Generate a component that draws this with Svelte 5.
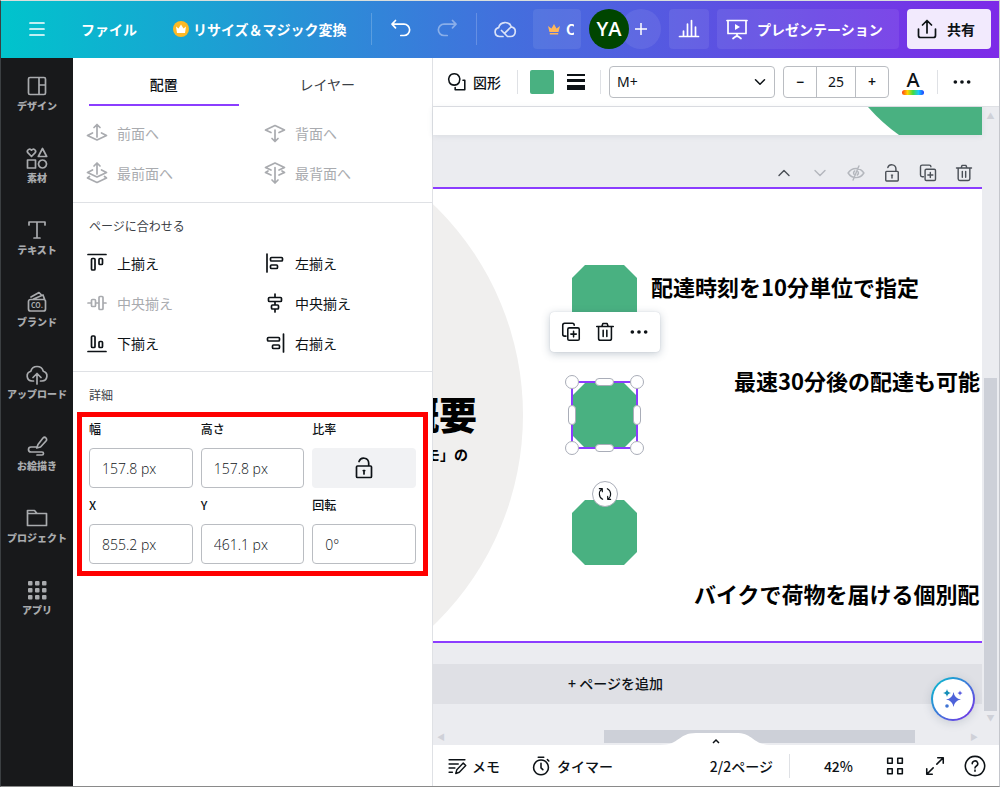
<script lang="ts">
    interface Action {
        icon: string,
        label: string,
        disabled?: boolean
    }

    // Outlines of all stroked icons, every one drawn on 24x24 grid
    const icons: Record<string, string> = {
        menu: "M5 6h14M5 12h14M5 18h14",
        undo: "M6.5 3.5 3 7.2l3.5 3.7M3.3 7.2H15a5.6 5.6 0 0 1 0 11.3h-3.2",
        redo: "M17.5 3.5 21 7.2l-3.5 3.7M20.7 7.2H9a5.6 5.6 0 0 0 0 11.3h3.2",
        cloud: "M10 19.5H6.5A4.5 4.5 0 0 1 5.7 10.6 6.6 6.6 0 0 1 18.3 9.8 4.9 4.9 0 0 1 17.6 19.5H14.5L8.5 13.5M11.5 16.3 18 10",
        chart: "M2.5 19.5h19M6.5 19v-5M10.5 19V7M14.5 19V3.5M18.5 19V10",
        present: "M2 3.5h20M3 3.5v13h18v-13M12 16.5v3M8 21.5l4-3 4 3",
        share: "M3.5 12v6.5a2 2 0 0 0 2 2h13a2 2 0 0 0 2-2V12M12 16V3.5M7.5 8 12 3.5 16.5 8",
        design: "M5 3.5h14a1.5 1.5 0 0 1 1.5 1.5v14a1.5 1.5 0 0 1-1.5 1.5H5A1.5 1.5 0 0 1 3.5 19V5A1.5 1.5 0 0 1 5 3.5zM14 3.5v17M14 11h6.5",
        elements: "M6.5 10.5 2.8 6.7a2.2 2.2 0 0 1 3.7-2.5 2.2 2.2 0 0 1 3.7 2.5zM17.5 2.5l4.2 8h-8.4zM2.5 14h8v8h-8zM17.5 14a4 4 0 1 0 .01 0z",
        text: "M4 7V4h16v3M12 4v16M9 20h6",
        brand: "M5.5 9.5h13a2 2 0 0 1 2 2V19a2 2 0 0 1-2 2h-13a2 2 0 0 1-2-2v-7.5a2 2 0 0 1 2-2zM6 7l8-4.5 2 2M8.5 9 18 5l1.5 4",
        upload: "M8.5 19H7a5 5 0 0 1-1.2-9.8 6.5 6.5 0 0 1 12.5 0A5 5 0 0 1 17 19h-1.5M12 22V12M8 15.5l4-4 4 4",
        draw: "M13 10.5 18 4a2 2 0 0 1 3 3l-5.5 6-3.8 1zM12 13H6a2.5 2.5 0 0 0 0 5h11a1.5 1.5 0 0 1 0 3h-5",
        folder: "M2.5 19.5v-15h7l2.5 3h9.5v12zM2.5 7.5H12",
        forward: "M12 16V4M9 6.5 12 3.5l3 3M7.5 12 2.5 14.5l9.5 4.5 9.5-4.5-5-2.5",
        backward: "M8 11.5 2.5 9 12 4.500l9.5 4.5-5.5 2.5M12 9v11M9 17.5l3 3 3-3",
        front: "M12 13V2.5M9 5l3-3 3 3M7.5 9 2.5 11.5 12 16l9.5-4.5-5-2.5M4.500 15.5 2.5 17l9.500 4.500L21.500 17l-2-1.500",
        back: "M8 9 2.5 6.5 12 2l9.5 4.5L16 9M5 10l-2.500 1.500L8 14M19 10l2.500 1.500L16 14M12 6.500v15.500M9 19l3 3 3-3",
        top: "M3 3.5h18M6.5 8.5a1 1 0 0 1 1-1h1.5a1 1 0 0 1 1 1V18a1 1 0 0 1-1 1H7.5a1 1 0 0 1-1-1zM14 8.5a1 1 0 0 1 1-1h1.5a1 1 0 0 1 1 1v4a1 1 0 0 1-1 1H15a1 1 0 0 1-1-1z",
        middle: "M3 12h3.5M10.5 12H14M18 12h3M7.5 8.5h2a1 1 0 0 1 1 1v5a1 1 0 0 1-1 1h-2a1 1 0 0 1-1-1v-5a1 1 0 0 1 1-1zM15 5.5h2a1 1 0 0 1 1 1v11a1 1 0 0 1-1 1h-2a1 1 0 0 1-1-1v-11a1 1 0 0 1 1-1z",
        bottom: "M3 20.5h18M6.5 6a1 1 0 0 1 1-1h1.5a1 1 0 0 1 1 1v9.5a1 1 0 0 1-1 1H7.5a1 1 0 0 1-1-1zM14 11.5a1 1 0 0 1 1-1h1.5a1 1 0 0 1 1 1v4a1 1 0 0 1-1 1H15a1 1 0 0 1-1-1z",
        left: "M4 3v18M8.5 6.5h10a1 1 0 0 1 1 1V9a1 1 0 0 1-1 1h-10a1 1 0 0 1-1-1V7.5a1 1 0 0 1 1-1zM8.5 14h5a1 1 0 0 1 1 1v1.5a1 1 0 0 1-1 1h-5a1 1 0 0 1-1-1V15a1 1 0 0 1 1-1z",
        center: "M12 3v3M12 10.5V14M12 18v3M6.5 6.5h11a1 1 0 0 1 1 1v2a1 1 0 0 1-1 1h-11a1 1 0 0 1-1-1v-2a1 1 0 0 1 1-1zM9.5 14h5a1 1 0 0 1 1 1v2a1 1 0 0 1-1 1h-5a1 1 0 0 1-1-1v-2a1 1 0 0 1 1-1z",
        right: "M20.5 3v18M5.5 6.5h10a1 1 0 0 1 1 1V9a1 1 0 0 1-1 1h-10a1 1 0 0 1-1-1V7.5a1 1 0 0 1 1-1zM10.5 14h5a1 1 0 0 1 1 1v1.5a1 1 0 0 1-1 1h-5a1 1 0 0 1-1-1V15a1 1 0 0 1 1-1z",
        lock: "M5.5 10h13a1 1 0 0 1 1 1v9.5a1 1 0 0 1-1 1h-13a1 1 0 0 1-1-1V11a1 1 0 0 1 1-1zM7 5.500a5 5 0 0 1 9.700 1.500v3M12 14.500V18M11.300 14.500h1.400",
        shape: "M9 3a6.2 6.2 0 1 0 .01 0zM18.5 10h2v10.5H10v-2.5",
        up: "M6 15l6-6 6 6",
        down: "M6 9l6 6 6-6",
        hidden: "M2.5 12S6 6.5 12 6.5 21.5 12 21.5 12 18 17.5 12 17.5 2.5 12 2.5 12zM15.5 3.5l-7 17M10.5 9.5a3.2 3.2 0 0 0-1 4M13.5 14.5a3.2 3.2 0 0 0 1-4",
        copy: "M6.5 16.5H5a2 2 0 0 1-2-2V4.5a2 2 0 0 1 2-2h8.5a2 2 0 0 1 2 2M10 7.5h9.5a1.5 1.5 0 0 1 1.5 1.5v10.5a1.5 1.5 0 0 1-1.5 1.5H10a1.5 1.5 0 0 1-1.5-1.5V9A1.5 1.5 0 0 1 10 7.5zM14.8 11.3v6M11.8 14.3h6",
        trash: "M3 6h18M8.5 6l1.2-3.2h4.6L15.5 6M5 6v13a2 2 0 0 0 2 2h10a2 2 0 0 0 2-2V6M10 10v7M14 10v7",
        notes: "M2.5 4.5h19M2.5 9.5h11M2.5 14.5h7M2.5 19.5h4M10.5 21l1.3-4.500 7.700-8 3 3-7.700 8z",
        timer: "M12 5.5a8 8 0 1 0 .01 0zM9 2.5h6M12 9v5l2 2M19 5l1.5 1.5",
        pages: "M4 3.5h5v5.5H4zM15 3.5h5v5.5h-5zM4 15h5v5.5H4zM15 15h5v5.5h-5z",
        expand: "M15 3h6v6M21 3l-7 7M9 21H3v-6M3 21l7-7",
        help: "M12 1.5a10.5 10.5 0 1 0 .01 0zM9 9.5a3 3 0 1 1 4.500 2.500c-1 .6-1.5 1-1.5 2.200M12 16.500v1.200",
        rotate: "M8.5 20A9 9 0 0 1 7.5 4.500M3.500 4h4.500v4.500M15.500 4a9 9 0 0 1 1 15.500M20.500 20H16v-4.500"
    };

    const navigation: Action[] = [
        { icon: "design", label: "デザイン" },
        { icon: "elements", label: "素材" },
        { icon: "text", label: "テキスト" },
        { icon: "brand", label: "ブランド" },
        { icon: "upload", label: "アップロード" },
        { icon: "draw", label: "お絵描き" },
        { icon: "folder", label: "プロジェクト" },
        { icon: "apps", label: "アプリ" }
    ];

    const layerActions: Action[] = [
        { icon: "forward", label: "前面へ", disabled: true },
        { icon: "backward", label: "背面へ", disabled: true },
        { icon: "front", label: "最前面へ", disabled: true },
        { icon: "back", label: "最背面へ", disabled: true }
    ];

    const alignActions: Action[] = [
        { icon: "top", label: "上揃え" },
        { icon: "left", label: "左揃え" },
        { icon: "middle", label: "中央揃え", disabled: true },
        { icon: "center", label: "中央揃え" },
        { icon: "bottom", label: "下揃え" },
        { icon: "right", label: "右揃え" }
    ];

    const pageActions: Action[] = [
        { icon: "up", label: "上に移動" },
        { icon: "down", label: "下に移動", disabled: true },
        { icon: "hidden", label: "非表示", disabled: true },
        { icon: "lock", label: "ロック" },
        { icon: "copy", label: "複製" },
        { icon: "trash", label: "削除" }
    ];

    let width = "157.8 px";
    let height = "157.8 px";
    let x = "855.2 px";
    let y = "461.1 px";
    let rotation = "0°";
    let fontSize = 25;
    let activeTab = "arrange";
</script>

{#snippet icon(name: string, size = 24)}
    <svg class="icon" width={size} height={size} viewBox="0 0 24 24" aria-hidden="true">
        {#if name == "apps"}
            {#each [3, 10, 17] as row}
                {#each [3, 10, 17] as column}
                    <rect class="solid" x={column} y={row} width="4.5" height="4.5" rx="1" />
                {/each}
            {/each}
        {:else if name == "more"}
            <circle class="solid" cx="4" cy="12" r="2.2" />
            <circle class="solid" cx="12" cy="12" r="2.2" />
            <circle class="solid" cx="20" cy="12" r="2.2" />
        {:else}
            <path d={icons[name]} />
            {#if name == "brand"}
                <text x="12" y="18" text-anchor="middle">CO.</text>
            {:else if name == "present"}
                <path class="solid" d="M10 7v6l5-3z" />
            {/if}
        {/if}
    </svg>
{/snippet}

<div class="app">
    <header>
        <button class="plain" aria-label="メニュー">{@render icon("menu")}</button>
        <button class="plain file">ファイル</button>
        <button class="plain resize">
            <svg width="16" height="16" viewBox="0 0 16 16" aria-hidden="true">
                <circle cx="8" cy="8" r="8" fill="#fdb924" />
                <path fill="#fff" d="M3 5.5l2.5 2L8 3.5l2.5 4 2.5-2-1 6.5H4z" />
            </svg>
            リサイズ＆マジック変換
        </button>
        <span class="divider"></span>
        <button class="plain undo" aria-label="元に戻す">{@render icon("undo")}</button>
        <button class="plain redo" aria-label="やり直す" disabled>{@render icon("redo")}</button>
        <span class="divider"></span>
        <button class="plain cloud" aria-label="保存済み">{@render icon("cloud")}</button>
        <div class="account">
            <button class="tile pro">
                <svg width="12" height="12" viewBox="0 0 12 12" aria-hidden="true">
                    <path fill="#ffb75a" d="M0 3l3.5 2.5L6 1l2.5 4.5L12 3l-1.5 6h-9zM1.8 10h8.4v1.5H1.8z" />
                </svg>
                <span>C</span>
            </button>
            <div class="members">
                <span class="avatar">YA</span>
                <button class="add" aria-label="メンバーを追加">
                    <svg width="12" height="12" viewBox="0 0 12 12" aria-hidden="true"><path d="M6 0v12M0 6h12" /></svg>
                </button>
            </div>
            <button class="tile chart" aria-label="分析">{@render icon("chart")}</button>
            <button class="tile present">{@render icon("present")}プレゼンテーション</button>
            <button class="tile share">{@render icon("share")}共有</button>
        </div>
    </header>

    <div class="body">
        <nav>
            {#each navigation as item}
                <button>
                    {@render icon(item.icon)}
                    <span>{item.label}</span>
                </button>
            {/each}
        </nav>

        <aside>
            <div class="tabs" role="tablist">
                <button role="tab" aria-selected={activeTab == "arrange"} class:active={activeTab == "arrange"} on:click={() => activeTab = "arrange"}>配置</button>
                <button role="tab" aria-selected={activeTab == "layers"} class:active={activeTab == "layers"} on:click={() => activeTab = "layers"}>レイヤー</button>
            </div>
            <div class="actions layers">
                {#each layerActions as action}
                    <button disabled={action.disabled}>{@render icon(action.icon)}{action.label}</button>
                {/each}
            </div>
            <section>
                <h2>ページに合わせる</h2>
                <div class="actions">
                    {#each alignActions as action}
                        <button disabled={action.disabled}>{@render icon(action.icon)}{action.label}</button>
                    {/each}
                </div>
            </section>
            <section>
                <h2>詳細</h2>
                <div class="details">
                    <label>幅 <input type="text" bind:value={width}></label>
                    <label>高さ <input type="text" bind:value={height}></label>
                    <div class="ratio">
                        <span id="ratio-label">比率</span>
                        <button aria-labelledby="ratio-label">{@render icon("lock")}</button>
                    </div>
                    <label>X <input type="text" bind:value={x}></label>
                    <label>Y <input type="text" bind:value={y}></label>
                    <label>回転 <input type="text" bind:value={rotation}></label>
                </div>
            </section>
        </aside>

        <main>
            <div class="toolbar">
                <button class="plain shape">{@render icon("shape", 22)}図形</button>
                <span class="divider"></span>
                <button class="swatch" aria-label="カラー"></button>
                <button class="plain" aria-label="線のスタイル">
                    <svg width="20" height="18" viewBox="0 0 20 18" aria-hidden="true">
                        <path fill="#0d1216" d="M1 1h18v2H1zM1 6h18v3H1zM1 12h18v5H1z" />
                    </svg>
                </button>
                <span class="divider"></span>
                <div class="font">
                    <select aria-label="フォント"><option>M+</option></select>
                    {@render icon("down", 18)}
                </div>
                <div class="stepper">
                    <button aria-label="小さく" on:click={() => fontSize -= 1}>−</button>
                    <input type="text" aria-label="フォントサイズ" bind:value={fontSize}>
                    <button aria-label="大きく" on:click={() => fontSize += 1}>+</button>
                </div>
                <button class="plain color" aria-label="テキストの色"><span>A</span></button>
                <span class="divider"></span>
                <button class="plain" aria-label="もっと見る">{@render icon("more", 20)}</button>
            </div>

            <div class="canvas">
                <div class="pages">
                    <div class="previous">
                        <svg width="114" height="28" viewBox="0 0 114 28" aria-hidden="true">
                            <path fill="#49b181" d="M0 0h114v28H31Q14 16 0 0z" />
                        </svg>
                    </div>
                    <div class="page-actions">
                        {#each pageActions as action}
                            <button aria-label={action.label} disabled={action.disabled}>{@render icon(action.icon, 20)}</button>
                        {/each}
                    </div>
                    <!-- Elements placed by user on the current page -->
                    <div class="page">
                        <div class="disc"></div>
                        <p class="title">概要</p>
                        <p class="subtitle">モ」の</p>
                        <div class="octagon first"></div>
                        <div class="octagon second"></div>
                        <div class="octagon third"></div>
                        <p class="line line-1">配達時刻を10分単位で指定</p>
                        <p class="line line-2">最速30分後の配達も可能</p>
                        <p class="line line-3">バイクで荷物を届ける個別配</p>
                        <div class="selection">
                            <i class="corner nw"></i><i class="corner ne"></i><i class="corner sw"></i><i class="corner se"></i>
                            <i class="edge n"></i><i class="edge s"></i><i class="edge w"></i><i class="edge e"></i>
                        </div>
                        <button class="rotate" aria-label="回転">{@render icon("rotate", 16)}</button>
                        <div class="floating">
                            <button aria-label="複製">{@render icon("copy", 22)}</button>
                            <button aria-label="削除">{@render icon("trash", 22)}</button>
                            <button aria-label="もっと見る">{@render icon("more", 20)}</button>
                        </div>
                    </div>
                    <button class="add-page">+ ページを追加</button>
                    <div class="scroll-x"><span>◀</span><b></b><span>▶</span></div>
                </div>
                <div class="scroll-y"><span>▲</span><b></b><span>▼</span></div>
                <button class="magic" aria-label="マジック">
                    <svg width="20" height="20" viewBox="0 0 20 20" aria-hidden="true">
                        <path fill="#4d62d9" d="M10.5 3Q11.5 9.5 18 10.5 11.5 11.5 10.5 18 9.5 11.5 3 10.5 9.5 9.5 10.5 3z" />
                        <path fill="#158fb8" d="M4 0q.5 3.5 4 4-3.5.5-4 4-.5-3.5-4-4 3.5-.5 4-4z" />
                        <path fill="#5a5ce0" d="M17 1.5q.3 2 2.5 2.5-2.2.5-2.5 2.5-.3-2-2.5-2.5 2.2-.5 2.5-2.5z" />
                        <circle cx="4" cy="17" r="1.8" fill="#3f74d4" />
                    </svg>
                </button>
            </div>

            <footer>
                <button class="notch" aria-label="サムネイルを表示">
                    <svg width="112" height="12" viewBox="0 0 112 12" aria-hidden="true">
                        <path fill="#fff" d="M0 12c20 0 18-12 36-12h40c18 0 16 12 36 12z" />
                        <path fill="none" stroke="#0d1216" stroke-width="1.5" d="M53 10l3-3 3 3" />
                    </svg>
                </button>
                <button class="plain notes">{@render icon("notes", 20)}メモ</button>
                <button class="plain timer">{@render icon("timer", 22)}タイマー</button>
                <span class="count">2/2ページ</span>
                <span class="divider"></span>
                <button class="plain zoom">42%</button>
                <div class="views">
                    <button aria-label="グリッド表示">{@render icon("pages", 22)}</button>
                    <button aria-label="全画面表示">{@render icon("expand", 22)}</button>
                    <button aria-label="ヘルプ">{@render icon("help", 22)}</button>
                </div>
            </footer>
        </main>
    </div>
</div>

<style>
    :global(body) {
        margin: 0;
    }

    .app {
        min-height: 100vh;
        box-sizing: border-box;
        display: flex;
        flex-direction: column;
        border: solid 1px #8a8a8a;
        border-top-color: #d9dfdc;
        border-left-color: #3b3f42;
        border-right-color: #c4c6cc;
        background-color: white;
        color: #0d1216;
        font-family: "Noto Sans CJK JP", sans-serif;
        font-size: 14px;
        line-height: 20px;
    }

    .app *, .app *::before {
        box-sizing: border-box;
    }

    button, input, select {
        margin: 0;
        padding: 0;
        border: none;
        background: none;
        color: inherit;
        font: inherit;
    }

    .icon, svg {
        flex-shrink: 0;
        display: block;
    }

    .icon {
        fill: none;
        stroke: currentColor;
        stroke-width: 1.7;
        stroke-linecap: round;
        stroke-linejoin: round;
    }

    .icon .solid {
        fill: currentColor;
        stroke: none;
    }

    .icon text {
        fill: currentColor;
        stroke: none;
        font-size: 7px;
        font-weight: bold;
    }

    .plain {
        display: flex;
        align-items: center;
        white-space: nowrap;
    }

    .divider {
        width: 1px;
        height: 24px;
        background-color: #dfe1e5;
    }

    /* Top bar */
    header {
        height: 57px;
        padding: 0 8px 2px 24px;
        display: flex;
        align-items: center;
        background: linear-gradient(90deg, #00c4cc, #4270dd 50%, #7d2ae8);
        color: white;
        font-weight: bold;
    }

    header .divider {
        height: 32px;
        background-color: rgba(255, 255, 255, 0.2);
    }

    header .file {
        margin-left: 32px;
    }

    header .resize {
        gap: 4px;
        margin: 0 24px 0 36px;
    }

    header .undo {
        margin: 0 22px 0 17px;
    }

    header .redo {
        margin-right: 17px;
        opacity: 0.4;
    }

    header .cloud {
        margin-left: 16px;
        opacity: 0.8;
    }

    .account {
        margin-left: auto;
        display: flex;
        gap: 8px;
    }

    .tile {
        height: 40px;
        display: flex;
        align-items: center;
        justify-content: center;
        border-radius: 4px;
        background-color: rgba(255, 255, 255, 0.08);
        white-space: nowrap;
    }

    .tile.pro {
        width: 48px;
        padding-left: 15px;
        justify-content: flex-start;
        gap: 6px;
    }

    .tile.pro span {
        width: 8px;
        overflow: hidden;
    }

    .tile.chart {
        width: 40px;
    }

    .tile.present, .tile.share {
        padding: 0 16px 0 8px;
        justify-content: flex-start;
        gap: 8px;
    }

    .tile.present {
        width: 182px;
    }

    .tile.share {
        background-color: #f2eafd;
        color: #0d1216;
    }

    .members {
        display: flex;
    }

    .avatar {
        z-index: 1;
        width: 40px;
        height: 40px;
        border-radius: 50%;
        background-color: #004500;
        font: 600 20px/40px "Open Sans", sans-serif;
        text-align: center;
    }

    .add {
        width: 40px;
        height: 40px;
        margin-left: -8px;
        display: flex;
        align-items: center;
        justify-content: center;
        border-radius: 50%;
        background-color: rgba(255, 255, 255, 0.08);
    }

    .add path {
        stroke: white;
        stroke-width: 1.5;
    }

    .body {
        flex: 1;
        display: flex;
    }

    /* Dark navigation on the left */
    nav {
        width: 72px;
        flex-shrink: 0;
        background-color: #18191b;
        color: #a9abae;
    }

    nav button {
        width: 100%;
        height: 72px;
        display: flex;
        flex-direction: column;
        align-items: center;
        justify-content: center;
        font-size: 10px;
        line-height: 16px;
        font-weight: 900;
        white-space: nowrap;
    }

    /* Panel with settings of position */
    aside {
        width: 360px;
        flex-shrink: 0;
        border-right: solid 1px #dfe1e5;
    }

    .tabs {
        padding: 0 30px 0 16px;
        display: grid;
        grid-template-columns: 1fr 1fr;
        gap: 14px;
    }

    .tabs button {
        height: 48px;
        padding-top: 6px;
        border-bottom: solid 2px transparent;
        color: #3b4046;
    }

    .tabs button.active {
        border-color: #8b3dff;
        color: #0d1216;
        font-weight: 500;
    }

    .actions {
        padding-left: 12px;
        display: grid;
        grid-template-columns: 178px 1fr;
    }

    .actions.layers {
        padding-top: 7px;
        padding-bottom: 9px;
    }

    .actions button {
        height: 40px;
        display: flex;
        align-items: center;
        gap: 8px;
    }

    .actions button:disabled {
        color: #a9abaf;
    }

    section {
        padding-bottom: 8px;
        border-top: solid 1px #dfe1e5;
    }

    h2 {
        margin: 0;
        padding: 13px 16px 7px;
        color: #3b4046;
        font-size: 12px;
        font-weight: normal;
    }

    .details {
        margin: 0 4px;
        padding: 4px 7px 7px;
        display: grid;
        grid-template-columns: repeat(3, 1fr);
        gap: 9px 8px;
        border: solid 5px #ff0000;
    }

    .details label, .ratio {
        display: flex;
        flex-direction: column;
        gap: 11px;
        font-size: 12px;
        line-height: 16px;
        font-weight: 500;
    }

    .details input {
        width: 100%;
        height: 40px;
        padding: 0 12px;
        border: solid 1px #babdc2;
        border-radius: 4px;
        font: 350 14px "Open Sans", sans-serif;
    }

    .ratio button {
        height: 40px;
        display: flex;
        align-items: center;
        justify-content: center;
        border-radius: 4px;
        background-color: #f1f2f4;
    }

    /* Tools for selected element */
    main {
        flex: 1;
        min-width: 0;
        display: flex;
        flex-direction: column;
    }

    .toolbar {
        height: 49px;
        padding: 0 27px 0 13px;
        display: flex;
        align-items: center;
        border-bottom: solid 1px #dfe1e5;
    }

    .shape {
        gap: 5px;
        margin-right: 16px;
        font-weight: 500;
    }

    .swatch {
        width: 24px;
        height: 24px;
        margin: 0 12px;
        border-radius: 2px;
        background-color: #49b181;
    }

    .toolbar .divider:nth-of-type(2) {
        margin-left: 14px;
    }

    .font {
        flex: 1;
        margin: 0 8px;
        display: grid;
        align-items: center;
    }

    .font select, .font .icon {
        grid-area: 1 / 1;
    }

    .font select {
        height: 32px;
        padding: 0 7px;
        border: solid 1px #babdc2;
        border-radius: 4px;
        appearance: none;
        font-family: "Noto Sans", sans-serif;
    }

    .font .icon {
        margin-right: 6px;
        justify-self: end;
        pointer-events: none;
        stroke-width: 2;
    }

    .stepper {
        width: 106px;
        height: 32px;
        display: grid;
        grid-template-columns: 32px 1fr 32px;
        border: solid 1px #babdc2;
        border-radius: 4px;
        font-family: "Noto Sans", sans-serif;
        font-weight: 600;
    }

    .stepper input {
        width: 100%;
        border: solid #babdc2;
        border-width: 0 1px;
        text-align: center;
        font-weight: normal;
    }

    .color {
        margin: 0 13px;
    }

    .color span {
        width: 22px;
        display: flex;
        flex-direction: column;
        align-items: center;
        font: 500 20px/20px "Noto Sans", sans-serif;
    }

    .color span::after {
        content: "";
        width: 22px;
        height: 5px;
        border-radius: 3px;
        background: linear-gradient(90deg, #ff3b14, #ffd500, #3fdc3f, #19c8ff, #1f3bff);
    }

    .toolbar .divider:nth-of-type(3) {
        margin-right: 14px;
    }

    /* Workspace */
    .canvas {
        position: relative;
        flex: 1;
        display: grid;
        grid-template-columns: 1fr 17px;
        background-color: #ebecf0;
    }

    .pages {
        min-width: 0;
        display: flex;
        flex-direction: column;
    }

    .previous {
        height: 28px;
        display: flex;
        justify-content: flex-end;
        background-color: white;
        box-shadow: 0 1px 6px rgba(57, 76, 96, 0.1);
    }

    .page-actions {
        height: 52px;
        padding-top: 24px;
        display: flex;
        justify-content: flex-end;
        color: #4b5057;
    }

    .page-actions button {
        width: 36px;
        height: 28px;
        display: flex;
        justify-content: center;
        align-items: center;
    }

    .page-actions button:disabled {
        color: #b4b7bd;
    }

    .page {
        position: relative;
        flex: 1;
        min-height: 456px;
        border: solid #8b3dff;
        border-width: 2px 0;
        background-color: white;
        overflow: hidden;
    }

    .page > * {
        position: absolute;
    }

    .page p {
        margin: 0;
        color: black;
        font-weight: bold;
        white-space: nowrap;
    }

    .disc {
        left: -494px;
        top: -66px;
        width: 584px;
        height: 584px;
        border-radius: 50%;
        background-color: #f0efee;
    }

    .page .title {
        left: -32px;
        top: 202px;
        font-size: 38px;
        line-height: 44px;
        font-weight: 900;
    }

    .page .subtitle {
        left: -7px;
        top: 255px;
    }

    .octagon {
        left: 139px;
        width: 65px;
        height: 65px;
        background-color: #49b181;
        clip-path: polygon(20% 0, 80% 0, 100% 20%, 100% 80%, 80% 100%, 20% 100%, 0 80%, 0 20%);
    }

    .octagon.first {
        top: 76px;
    }

    .octagon.second {
        top: 194px;
    }

    .octagon.third {
        top: 311px;
    }

    .line {
        font-size: 22px;
        line-height: 32px;
    }

    .line-1 {
        left: 218px;
        top: 81px;
    }

    .line-2 {
        left: 301px;
        top: 175px;
    }

    .line-3 {
        left: 261px;
        top: 388px;
    }

    .selection {
        left: 138px;
        top: 192px;
        width: 67px;
        height: 68px;
        border: solid 2px #8b3dff;
    }

    .selection i {
        position: absolute;
        border: solid 1px #a9adb8;
        background-color: white;
    }

    .corner {
        width: 14px;
        height: 14px;
        border-radius: 50%;
    }

    .edge {
        border-radius: 4px;
    }

    .nw, .ne {
        top: -8px;
    }

    .sw, .se {
        bottom: -8px;
    }

    .nw, .sw {
        left: -8px;
    }

    .ne, .se {
        right: -8px;
    }

    .n, .s {
        left: 22px;
        width: 19px;
        height: 8px;
    }

    .w, .e {
        top: 22px;
        width: 8px;
        height: 20px;
    }

    .n {
        top: -5px;
    }

    .s {
        bottom: -5px;
    }

    .w {
        left: -5px;
    }

    .e {
        right: -5px;
    }

    .rotate {
        left: 159px;
        top: 292px;
        width: 26px;
        height: 26px;
        display: flex;
        align-items: center;
        justify-content: center;
        border: solid 1px #a9adb8;
        border-radius: 50%;
        background-color: white;
    }

    .floating {
        left: 117px;
        top: 123px;
        height: 40px;
        padding: 0 4px;
        display: flex;
        border-radius: 4px;
        background-color: white;
        box-shadow: 0 0 1px rgba(64, 87, 109, 0.3), 0 2px 8px rgba(64, 87, 109, 0.3);
    }

    .floating button {
        width: 34px;
        display: flex;
        align-items: center;
        justify-content: center;
    }

    .add-page {
        height: 40px;
        margin: 21px 0 26px;
        padding: 0 184px 2px 0;
        background-color: #dfe0e5;
        font-weight: 500;
    }

    .scroll-x {
        height: 15px;
        padding: 0 4px;
        display: flex;
        align-items: flex-start;
        color: #cfd1d8;
        font-size: 8px;
        line-height: 13px;
    }

    .scroll-x b {
        width: 311px;
        height: 13px;
        margin: 0 auto 0 159px;
        background-color: #cdd0d8;
    }

    .scroll-y {
        padding: 2px 2px 20px;
        display: flex;
        flex-direction: column;
        align-items: center;
        color: #cfd1d8;
        font-size: 8px;
        line-height: 14px;
    }

    .scroll-y b {
        width: 13px;
        height: 333px;
        margin-top: auto;
        background-color: #cdd0d8;
    }

    .magic {
        position: absolute;
        right: 24px;
        bottom: 24px;
        width: 44px;
        height: 44px;
        display: flex;
        align-items: center;
        justify-content: center;
        border: solid 2px transparent;
        border-radius: 50%;
        background: linear-gradient(white, white) padding-box, linear-gradient(135deg, #00c4cc, #7d2ae8) border-box;
        box-shadow: 0 2px 10px rgba(64, 87, 109, 0.2);
    }

    footer {
        position: relative;
        height: 41px;
        padding: 0 13px 0 14px;
        display: flex;
        align-items: center;
        background-color: white;
        font-weight: 500;
    }

    .notch {
        position: absolute;
        left: 50%;
        bottom: 100%;
        transform: translateX(-50%);
    }

    .notes, .timer {
        gap: 5px;
    }

    .timer {
        margin-left: 30px;
    }

    .count {
        margin: 0 16px 0 auto;
    }

    .zoom {
        margin: 0 31px 0 34px;
    }

    .views {
        display: flex;
        gap: 18px;
    }
</style>
